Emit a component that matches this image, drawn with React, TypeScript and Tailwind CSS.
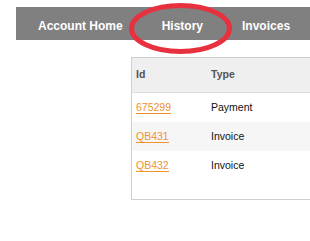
const rows = [
  { id: '675299', type: 'Payment' },
  { id: 'QB431', type: 'Invoice' },
  { id: 'QB432', type: 'Invoice' },
];

const App = () => {
  return (
    <div className="relative w-[310px] h-[241px] bg-white overflow-hidden font-['Liberation_Sans',Arial,sans-serif]">
      <div className="ml-[16px] mt-[7px] h-[33px] bg-[#808080] flex items-center pt-[4px] pl-[22px] gap-[39px] text-white font-bold text-[12px] whitespace-nowrap">
        <span>Account Home</span>
        <span>History</span>
        <span>Invoices</span>
      </div>
      <div className="ml-[131px] mt-[17px] w-[190px] h-[143px] border border-[#cfcfcf] text-[10.5px]">
        <div className="h-[35px] flex items-center bg-[#efefef] border-b border-[#dedede] font-bold text-[#555555]">
          <span className="w-[79px] pl-[4px]">Id</span>
          <span>Type</span>
        </div>
        {rows.map((row, i) => (
          <div
            key={row.id}
            className={
              i % 2 === 1
                ? 'h-[29px] flex items-center bg-[#f6f6f6]'
                : 'h-[29px] flex items-center bg-white'
            }
          >
            <span className="w-[79px] pl-[4px] flex">
              <a href="#" className="text-[#f0922e] leading-[12px] border-b border-[#f0922e]">
                {row.id}
              </a>
            </span>
            <span className="text-[#111111]">{row.type}</span>
          </div>
        ))}
      </div>
      {/* red annotation ring */}
      <svg className="absolute left-0 top-0" width="310" height="241">
        <ellipse cx="180.5" cy="28.5" rx="49" ry="23" fill="none" stroke="#e8313f" strokeWidth="5" />
      </svg>
    </div>
  );
};

export default App;
